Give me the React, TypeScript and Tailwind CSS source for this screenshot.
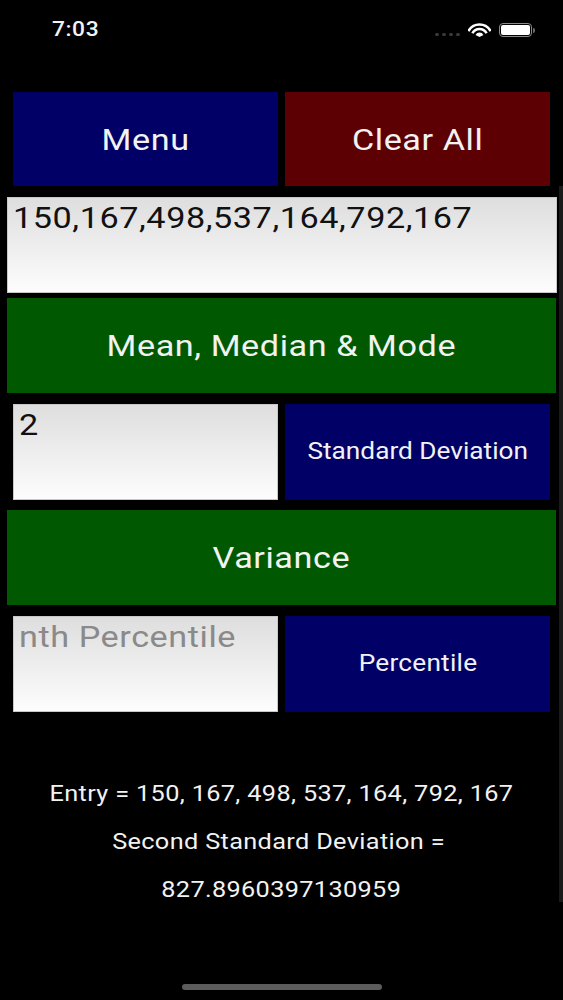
const fieldBg = 'border border-[#c8c8c8] bg-gradient-to-b from-[#dedede] to-[#fdfdfd]'

function Stretched({ text, left }: { text: string; left?: boolean }) {
  return <span className={`inline-block whitespace-pre scale-x-[1.14] ${left ? 'origin-left' : 'origin-center'}`}>{text}</span>
}

function ActionButton({ label, className }: { label: string; className: string }) {
  return (
    <button type="button" className={`flex items-center justify-center text-[#f2f2f2] ${className}`}>
      <Stretched text={label} />
    </button>
  )
}

function Field({ text, className }: { text: string; className: string }) {
  return (
    <div className={`${fieldBg} h-[96px] px-[5px] pt-[1px] text-[30px] leading-[38px] tracking-[0.5px] ${className}`}>
      <Stretched text={text} left />
    </div>
  )
}

function WifiIcon() {
  return (
    <svg width="23" height="14" viewBox="0 0 23 14" fill="none" className="text-white">
      <path d="M0.4 8.1A12.6 12.6 0 0 1 22.6 8.1" stroke="currentColor" strokeWidth="2.6" />
      <path d="M4.44 10.24A8 8 0 0 1 18.56 10.24" stroke="currentColor" strokeWidth="2.6" />
      <path d="M11.5 14L7.53 11.9A4.5 4.5 0 0 1 15.47 11.9Z" fill="currentColor" />
    </svg>
  )
}

export default function App() {
  return (
    <div className="relative h-[1000px] w-[563px] overflow-hidden bg-black font-['Roboto',sans-serif]">
      <div className="flex h-[92px] items-start justify-between pl-[52px] pr-[28px] pt-[17px]">
        <span className="text-[20px] leading-[24px] font-medium tracking-[0.5px] text-[#f2f2f2]">
          <Stretched text="7:03" left />
        </span>
        <div className="flex items-end gap-[8px] pt-[6px]">
          <div className="flex gap-[3px] pb-[1px]">
            <span className="h-[3px] w-[4px] rounded-full bg-[#3a3a3a]" />
            <span className="h-[3px] w-[4px] rounded-full bg-[#3a3a3a]" />
            <span className="h-[3px] w-[4px] rounded-full bg-[#3a3a3a]" />
            <span className="h-[3px] w-[4px] rounded-full bg-[#3a3a3a]" />
          </div>
          <WifiIcon />
          <div className="flex items-center">
            <div className="h-[14px] w-[33px] rounded-[4px] border border-[#8a8a8a] p-[1px]">
              <div className="h-full w-full rounded-[2px] bg-white" />
            </div>
            <div className="ml-[1px] h-[5px] w-[2px] rounded-r bg-[#6a6a6a]" />
          </div>
        </div>
      </div>

      <div className="flex flex-col">
        <div className="flex gap-[7px] pl-[13px] pr-[13px] text-[30px] tracking-[0.5px]">
          <ActionButton label="Menu" className="h-[94px] w-[265px] bg-[#000066]" />
          <ActionButton label="Clear All" className="h-[94px] w-[265px] bg-[#5c0004]" />
        </div>

        <div className="ml-[7px] mt-[11px]">
          <Field text="150,167,498,537,164,792,167" className="w-[550px] text-[#111]" />
        </div>

        <div className="ml-[7px] mt-[5px] text-[30px] tracking-[0.5px]">
          <ActionButton label="Mean, Median & Mode" className="h-[95px] w-[549px] bg-[#005900]" />
        </div>

        <div className="mt-[11px] flex gap-[7px] pl-[13px] pr-[13px]">
          <Field text="2" className="w-[265px] text-[#111]" />
          <ActionButton label="Standard Deviation" className="h-[96px] w-[265px] bg-[#000066] text-[23px]" />
        </div>

        <div className="ml-[7px] mt-[10px] text-[30px] tracking-[0.5px]">
          <ActionButton label="Variance" className="h-[95px] w-[549px] bg-[#005900]" />
        </div>

        <div className="mt-[11px] flex gap-[7px] pl-[13px] pr-[13px]">
          <Field text="nth Percentile" className="w-[265px] text-[#8a8a8a]" />
          <ActionButton label="Percentile" className="h-[96px] w-[265px] bg-[#000066] text-[23px] tracking-[0.2px]" />
        </div>

        <div className="mt-[57px] flex flex-col items-center text-[22.2px] leading-[48px] tracking-[0.3px] text-[#f2f2f2]">
          <p><Stretched text="Entry = 150, 167, 498, 537, 164, 792, 167" /></p>
          <p><Stretched text={'Second Standard Deviation = '} /></p>
          <p><Stretched text="827.8960397130959" /></p>
        </div>
      </div>

      <div className="absolute bottom-[10px] left-[182px] h-[6px] w-[200px] rounded-full bg-[#5c5c5c]" />
      <div className="absolute right-0 top-[186px] h-[716px] w-[4px] bg-[#1a1a1a]" />
    </div>
  )
}
